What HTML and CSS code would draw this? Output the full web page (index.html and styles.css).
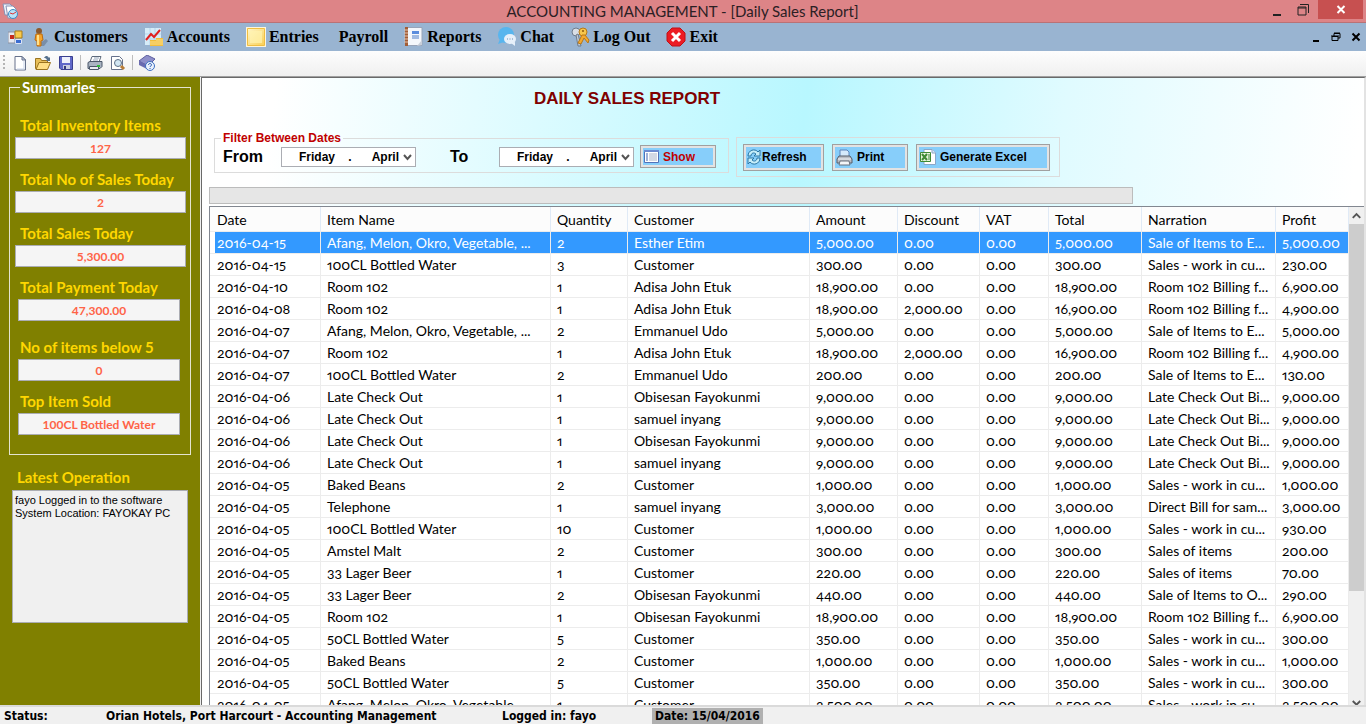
FILE: index.html
```
<!DOCTYPE html>
<html lang="en">
<head>
  <meta charset="UTF-8">
  <meta name="viewport" content="width=device-width, initial-scale=1.0">
  <title>ACCOUNTING MANAGEMENT - [Daily Sales Report]</title>
  <link rel="stylesheet" href="styles.css">
</head>
<body>

<header class="titlebar">
  <svg class="app-icon" width="18" height="18" viewBox="0 0 18 18">
    <path d="M2 2h7l2 2v9H4z" fill="#eef3fb" stroke="#8792b5"/>
    <path d="M5 4h7l3 3v9H7z" fill="#fff" stroke="#8792b5"/>
    <circle cx="12" cy="12" r="4.500" fill="#b9e3f7" stroke="#3d8cc4"/>
    <path d="M12 12l3-2M12 12l-3-1" stroke="#d33" fill="none"/>
  </svg>
  <h1 class="title">ACCOUNTING MANAGEMENT - [Daily Sales Report]</h1>
  <div class="window-buttons">
    <button class="win-btn" aria-label="Minimize"><svg width="12" height="14" viewBox="0 0 12 14"><path d="M2 11h8v2H2z" fill="#222"/></svg></button>
    <button class="win-btn" aria-label="Restore"><svg width="12" height="14" viewBox="0 0 12 14"><path d="M1 4h8v8H1zM1 5h8M3 1.500h8.500V10" fill="none" stroke="#222"/></svg></button>
    <button class="win-btn close" aria-label="Close"><svg width="10" height="9" viewBox="0 0 10 9"><path d="M1.500 1l7 7M8.500 1l-7 7" stroke="#fff" stroke-width="2"/></svg></button>
  </div>
</header>

<nav class="menubar">
  <a href="#" class="form-icon" aria-label="System menu">
    <svg width="15" height="15" viewBox="0 0 15 15">
      <path d="M0 2h7v11H0z" fill="#e6e9f0" stroke="#8a93a5"/>
      <path d="M2 5h4v4H2z" fill="#c62a1c"/>
      <path d="M7 1h7v7H7z" fill="#f8ca4c" stroke="#a87b18"/>
      <path d="M7.500 9.500h6v4h-6z" fill="#3a6cd0" stroke="#dbe3f5"/>
    </svg>
  </a>
  <a href="#" class="menu-item">
    <svg width="20" height="20" viewBox="0 0 20 20">
      <path d="M9 16l6-4 2 2-4 5H9z" fill="#65758a" opacity=".6"/>
      <circle cx="8" cy="4" r="3" fill="#8b5a2e"/>
      <path d="M5 7h6l1 6-2 1v5H6v-5l-2-1z" fill="#f5a32a" stroke="#bb6a0c"/>
      <path d="M6 8h2v10H6z" fill="#ffe08a"/>
    </svg>
    Customers
  </a>
  <a href="#" class="menu-item">
    <svg width="20" height="20" viewBox="0 0 20 20">
      <path d="M1 1h16v17H1z" fill="#d6ecf8"/>
      <path d="M1 7h16M1 12h16M6 1v17M11 1v17" stroke="#b4d7ec"/>
      <path d="M2 13l5-6 3 3 6-7" fill="none" stroke="#e02020" stroke-width="2"/>
      <path d="M6 13h6v6H6zM12 11h7v8h-7z" fill="#f2bd3b"/>
      <path d="M6 15h6M6 17h6M12 13h7M12 15h7M12 17h7" stroke="#fbe08d"/>
    </svg>
    Accounts
  </a>
  <a href="#" class="menu-item">
    <svg width="20" height="20" viewBox="0 0 20 20">
      <defs>
        <linearGradient id="note" x1="0" y1="0" x2="1" y2="1"><stop offset="0" stop-color="#fff6c8"/><stop offset="1" stop-color="#f9cf55"/></linearGradient>
      </defs>
      <path d="M0 0h20v20H0z" fill="#fdf5dc"/>
      <path d="M1.500 1.500h17v17h-17z" fill="url(#note)" stroke="#f0be42"/>
      <path d="M4 4h12v12H4z" fill="#fff3b0" opacity=".7"/>
    </svg>
    Entries
  </a>
  <a href="#" class="menu-item text-only">Payroll</a>
  <a href="#" class="menu-item">
    <svg width="20" height="20" viewBox="0 0 20 20">
      <path d="M3 .5h15v18H3z" fill="#f4f7fb" stroke="#98a4b8"/>
      <path d="M1 0h3v19H1z" fill="#a35d35"/>
      <path d="M0 3h4M0 6h4M0 9h4M0 12h4M0 15h4" stroke="#e4c6b2"/>
      <path d="M8 4h7v3H8z" fill="#5b8ddd"/>
      <path d="M8 9h7M8 11h7" stroke="#4f7fc8"/>
      <path d="M18 13l-5 6 5-1z" fill="#c8cfda"/>
    </svg>
    Reports
  </a>
  <a href="#" class="menu-item">
    <svg width="20" height="20" viewBox="0 0 20 20">
      <circle cx="9" cy="8" r="8" fill="#58b5ee"/>
      <path d="M3 12l-2 5 6-2z" fill="#58b5ee"/>
      <ellipse cx="13" cy="12" rx="6" ry="5" fill="#e7f0fa"/>
      <path d="M14 16l4 3v-4z" fill="#e7f0fa"/>
      <path d="M10 12h1M12.500 12h1M15 12h1" stroke="#6d8fb5" stroke-width="1"/>
    </svg>
    Chat
  </a>
  <a href="#" class="menu-item">
    <svg width="20" height="20" viewBox="0 0 20 20">
      <circle cx="6" cy="5" r="4" fill="#d9dee5" stroke="#6f7c8c"/>
      <path d="M6 8l2 11h3L8 7z" fill="#c3cad3" stroke="#6f7c8c"/>
      <circle cx="13" cy="5" r="4" fill="#f7c64b" stroke="#b87818"/>
      <circle cx="13" cy="4" r="1" fill="#8f5a0b"/>
      <path d="M12 8l-4 8 3 1 3-6 4 5 1-3-4-5z" fill="#f4a92e" stroke="#b87818"/>
    </svg>
    Log Out
  </a>
  <a href="#" class="menu-item">
    <svg width="20" height="20" viewBox="0 0 20 20">
      <path d="M6 1h8l5 5v8l-5 5H6l-5-5V6z" fill="#ec1c24" stroke="#c01016"/>
      <path d="M6 6l8 8M14 6l-8 8" stroke="#fff" stroke-width="3"/>
    </svg>
    Exit
  </a>
  <div class="child-buttons">
    <button class="mdi-btn" aria-label="Minimize report"><svg width="10" height="10" viewBox="0 0 10 10"><path d="M2 8h6v2H2z"/></svg></button>
    <button class="mdi-btn" aria-label="Restore report"><svg width="10" height="10" viewBox="0 0 10 10"><path d="M1 4.500h6v4H1zM3 4V1.500h6V6H7M0 4h8M3 1h6" fill="none" stroke="#000"/></svg></button>
    <button class="mdi-btn" aria-label="Close report"><svg width="10" height="10" viewBox="0 0 10 10"><path d="M1.500 1.500l7 7M8.500 1.500l-7 7" stroke="#000" stroke-width="2"/></svg></button>
  </div>
</nav>

<div class="toolbar">
  <span class="grip"></span>
  <button class="tool" aria-label="New">
    <svg width="16" height="16" viewBox="0 0 16 16"><path d="M3 1.500h7L13.500 5v10H3z" fill="#fff" stroke="#66718b"/><path d="M10 1.500V5h3.500z" fill="#c5d0e6" stroke="#66718b"/><path d="M12 6v8H5" fill="none" stroke="#c9d5ea"/></svg>
  </button>
  <button class="tool" aria-label="Open">
    <svg width="16" height="16" viewBox="0 0 16 16"><path d="M.5 3.500h5l1 2h6v8H.5z" fill="#e8bf5a" stroke="#9a7420"/><path d="M4 7.500h11.500l-3 7H1z" fill="#ffdf85" stroke="#9a7420"/><path d="M9 3c2-3 4-2 5 0l1-1v4h-4l1-1c-1-2-2-2-3-2z" fill="#55708e"/></svg>
  </button>
  <button class="tool" aria-label="Save">
    <svg width="16" height="16" viewBox="0 0 16 16"><path d="M1.500 1.500h13v13H3l-1.500-1.500z" fill="#6068c8" stroke="#3a3f8f"/><path d="M4 2h8v6H4z" fill="#eef0fb"/><path d="M5 10h7v4H5z" fill="#c9cde0"/><path d="M6 11h2v3H6z" fill="#343a7a"/></svg>
  </button>
  <span class="divider"></span>
  <button class="tool" aria-label="Print">
    <svg width="16" height="16" viewBox="0 0 16 16"><path d="M5 1.500h9L12 7H3z" fill="#fff" stroke="#5e6b7d"/><path d="M7 3h5M6 5h5" stroke="#95a4b8"/><path d="M1 7.500l2-1h12v5l-2 2H1z" fill="#aab4c2" stroke="#4b5768"/><path d="M2.500 11.500h9v3h-9z" fill="#e9edf2" stroke="#4b5768"/><path d="M10 10h3v2h-3z" fill="#2fbb3a"/></svg>
  </button>
  <button class="tool" aria-label="Print preview">
    <svg width="16" height="16" viewBox="0 0 16 16"><path d="M1.500 1.500h8l3 3v10h-11z" fill="#fff" stroke="#66718b"/><circle cx="8" cy="8" r="3.500" fill="#d2e6f3" stroke="#5c6f85"/><path d="M11 11l3 3" stroke="#b77b35" stroke-width="3"/></svg>
  </button>
  <span class="divider"></span>
  <button class="tool" aria-label="Help">
    <svg width="16" height="16" viewBox="0 0 16 16"><path d="M0 6l8-6 8 4-7 7z" fill="#8e8fca" stroke="#5d5e9e"/><path d="M0 6v4l8 4V10z" fill="#6a6bb0"/><circle cx="11" cy="11" r="4.500" fill="#e9f1fc" stroke="#3c6fc0"/><path d="M9.500 10c0-2 3-2 3 0 0 1-1.500 1-1.500 2M11 13v1" fill="none" stroke="#2456b0" stroke-width="1"/></svg>
  </button>
</div>

<div class="workspace">
  <aside class="sidebar">
    <fieldset class="summaries">
      <legend>Summaries</legend>
      <div class="stat">
        <label for="inventory">Total Inventory Items</label>
        <input id="inventory" type="text" value="127" readonly>
      </div>
      <div class="stat">
        <label for="salesCount">Total No of Sales Today</label>
        <input id="salesCount" type="text" value="2" readonly>
      </div>
      <div class="stat">
        <label for="salesTotal">Total Sales Today</label>
        <input id="salesTotal" type="text" value="5,300.00" readonly>
      </div>
      <div class="stat narrow">
        <label for="payments">Total Payment Today</label>
        <input id="payments" type="text" value="47,300.00" readonly>
      </div>
      <div class="stat narrow apart">
        <label for="lowStock">No of items below 5</label>
        <input id="lowStock" type="text" value="0" readonly>
      </div>
      <div class="stat narrow">
        <label for="topItem">Top Item Sold</label>
        <input id="topItem" type="text" value="100CL Bottled Water" readonly>
      </div>
    </fieldset>
    <div class="latest">
      <label for="operations">Latest Operation</label>
      <textarea id="operations" readonly>fayo Logged in to the software
System Location: FAYOKAY PC</textarea>
    </div>
  </aside>

  <main class="report">
    <h2>DAILY SALES REPORT</h2>

    <div class="filters">
      <fieldset class="dates">
        <legend>Filter Between Dates</legend>
        <label for="fromDate">From</label>
        <span class="picker">
          <select id="fromDate"><option>Friday &nbsp; &nbsp;. &nbsp; &nbsp; &nbsp;April</option></select>
          <svg width="9" height="7" viewBox="0 0 9 7"><path d="M1 1l3.500 4L8 1" fill="none" stroke="#555" stroke-width="2"/></svg>
        </span>
        <label for="toDate" class="to">To</label>
        <span class="picker">
          <select id="toDate"><option>Friday &nbsp; &nbsp;. &nbsp; &nbsp; &nbsp;April</option></select>
          <svg width="9" height="7" viewBox="0 0 9 7"><path d="M1 1l3.500 4L8 1" fill="none" stroke="#555" stroke-width="2"/></svg>
        </span>
        <button class="action show">
          <svg width="15" height="13" viewBox="0 0 15 13"><path d="M.5 .5h14v12H.5z" fill="#fff" stroke="#5272b8"/><path d="M0 0h15v2H0z" fill="#6c8bd0"/><path d="M2 4h2M2 6h2M2 8h2M2 10h2" stroke="#3f62b0"/><path d="M5 4h8M5 6h8M5 8h8M5 10h8" stroke="#a9b4c9"/></svg>
          Show
        </button>
      </fieldset>

      <div class="actions">
        <button class="action refresh">
          <svg width="14" height="16" viewBox="0 0 14 16"><path d="M1 7c0-6 7-8 10-4l2-2v6H7l2-2C7 3 4 4 4 7zM13 9c0 6-7 8-10 4l-2 2V9h6l-2 2c2 2 5 1 5-2z" fill="#c6eefa" stroke="#2a76a4"/></svg>
          Refresh
        </button>
        <button class="action print">
          <svg width="17" height="17" viewBox="0 0 17 17"><path d="M4 1h7l2 2v6H4z" fill="#d5e9fb" stroke="#5c84bb"/><path d="M3 7h11l2 3v4H1v-4z" fill="#b8bcc4" stroke="#565c68"/><path d="M2 10h13" stroke="#f5f5f7"/><path d="M4 12h9l1 4H3z" fill="#f4f6f9" stroke="#6a707c"/></svg>
          Print
        </button>
        <button class="action excel">
          <svg width="16" height="16" viewBox="0 0 16 16"><path d="M4 .5h8l3.500 3.500v11.500H4z" fill="#fff" stroke="#8ba6c8"/><path d="M12 .5V4h3.500" fill="#dce7f5" stroke="#8ba6c8"/><path d="M.5 3.500h10v9H.5z" fill="#e6f3dd" stroke="#3f8a35"/><path d="M2 5l5 6M7 5l-5 6" stroke="#3f8a35" stroke-width="2"/><path d="M8 6h2M8 8h2M8 10h2" stroke="#3f8a35"/></svg>
          Generate Excel
        </button>
      </div>
    </div>

    <progress value="0" max="100" aria-label="Report progress"></progress>

    <div class="grid">
      <div class="grid-rows">
        <table>
          <colgroup>
            <col class="c-date"><col class="c-item"><col class="c-qty"><col class="c-customer"><col class="c-amount">
            <col class="c-discount"><col class="c-vat"><col class="c-total"><col class="c-narration"><col class="c-profit">
          </colgroup>
          <thead>
            <tr><th>Date</th><th>Item Name</th><th>Quantity</th><th>Customer</th><th>Amount</th><th>Discount</th><th>VAT</th><th>Total</th><th>Narration</th><th>Profit</th></tr>
          </thead>
          <tbody>
            <tr class="selected"><td>2016-04-15</td><td>Afang, Melon, Okro, Vegetable, ...</td><td>2</td><td>Esther Etim</td><td>5,000.00</td><td>0.00</td><td>0.00</td><td>5,000.00</td><td>Sale of Items to E...</td><td>5,000.00</td></tr>
            <tr><td>2016-04-15</td><td>100CL Bottled Water</td><td>3</td><td>Customer</td><td>300.00</td><td>0.00</td><td>0.00</td><td>300.00</td><td>Sales - work in cu...</td><td>230.00</td></tr>
            <tr><td>2016-04-10</td><td>Room 102</td><td>1</td><td>Adisa John Etuk</td><td>18,900.00</td><td>0.00</td><td>0.00</td><td>18,900.00</td><td>Room 102 Billing f...</td><td>6,900.00</td></tr>
            <tr><td>2016-04-08</td><td>Room 102</td><td>1</td><td>Adisa John Etuk</td><td>18,900.00</td><td>2,000.00</td><td>0.00</td><td>16,900.00</td><td>Room 102 Billing f...</td><td>4,900.00</td></tr>
            <tr><td>2016-04-07</td><td>Afang, Melon, Okro, Vegetable, ...</td><td>2</td><td>Emmanuel Udo</td><td>5,000.00</td><td>0.00</td><td>0.00</td><td>5,000.00</td><td>Sale of Items to E...</td><td>5,000.00</td></tr>
            <tr><td>2016-04-07</td><td>Room 102</td><td>1</td><td>Adisa John Etuk</td><td>18,900.00</td><td>2,000.00</td><td>0.00</td><td>16,900.00</td><td>Room 102 Billing f...</td><td>4,900.00</td></tr>
            <tr><td>2016-04-07</td><td>100CL Bottled Water</td><td>2</td><td>Emmanuel Udo</td><td>200.00</td><td>0.00</td><td>0.00</td><td>200.00</td><td>Sale of Items to E...</td><td>130.00</td></tr>
            <tr><td>2016-04-06</td><td>Late Check Out</td><td>1</td><td>Obisesan Fayokunmi</td><td>9,000.00</td><td>0.00</td><td>0.00</td><td>9,000.00</td><td>Late Check Out Bi...</td><td>9,000.00</td></tr>
            <tr><td>2016-04-06</td><td>Late Check Out</td><td>1</td><td>samuel inyang</td><td>9,000.00</td><td>0.00</td><td>0.00</td><td>9,000.00</td><td>Late Check Out Bi...</td><td>9,000.00</td></tr>
            <tr><td>2016-04-06</td><td>Late Check Out</td><td>1</td><td>Obisesan Fayokunmi</td><td>9,000.00</td><td>0.00</td><td>0.00</td><td>9,000.00</td><td>Late Check Out Bi...</td><td>9,000.00</td></tr>
            <tr><td>2016-04-06</td><td>Late Check Out</td><td>1</td><td>samuel inyang</td><td>9,000.00</td><td>0.00</td><td>0.00</td><td>9,000.00</td><td>Late Check Out Bi...</td><td>9,000.00</td></tr>
            <tr><td>2016-04-05</td><td>Baked Beans</td><td>2</td><td>Customer</td><td>1,000.00</td><td>0.00</td><td>0.00</td><td>1,000.00</td><td>Sales - work in cu...</td><td>1,000.00</td></tr>
            <tr><td>2016-04-05</td><td>Telephone</td><td>1</td><td>samuel inyang</td><td>3,000.00</td><td>0.00</td><td>0.00</td><td>3,000.00</td><td>Direct Bill for sam...</td><td>3,000.00</td></tr>
            <tr><td>2016-04-05</td><td>100CL Bottled Water</td><td>10</td><td>Customer</td><td>1,000.00</td><td>0.00</td><td>0.00</td><td>1,000.00</td><td>Sales - work in cu...</td><td>930.00</td></tr>
            <tr><td>2016-04-05</td><td>Amstel Malt</td><td>2</td><td>Customer</td><td>300.00</td><td>0.00</td><td>0.00</td><td>300.00</td><td>Sales of items</td><td>200.00</td></tr>
            <tr><td>2016-04-05</td><td>33 Lager Beer</td><td>1</td><td>Customer</td><td>220.00</td><td>0.00</td><td>0.00</td><td>220.00</td><td>Sales of items</td><td>70.00</td></tr>
            <tr><td>2016-04-05</td><td>33 Lager Beer</td><td>2</td><td>Obisesan Fayokunmi</td><td>440.00</td><td>0.00</td><td>0.00</td><td>440.00</td><td>Sale of Items to O...</td><td>290.00</td></tr>
            <tr><td>2016-04-05</td><td>Room 102</td><td>1</td><td>Obisesan Fayokunmi</td><td>18,900.00</td><td>0.00</td><td>0.00</td><td>18,900.00</td><td>Room 102 Billing f...</td><td>6,900.00</td></tr>
            <tr><td>2016-04-05</td><td>50CL Bottled Water</td><td>5</td><td>Customer</td><td>350.00</td><td>0.00</td><td>0.00</td><td>350.00</td><td>Sales - work in cu...</td><td>300.00</td></tr>
            <tr><td>2016-04-05</td><td>Baked Beans</td><td>2</td><td>Customer</td><td>1,000.00</td><td>0.00</td><td>0.00</td><td>1,000.00</td><td>Sales - work in cu...</td><td>1,000.00</td></tr>
            <tr><td>2016-04-05</td><td>50CL Bottled Water</td><td>5</td><td>Customer</td><td>350.00</td><td>0.00</td><td>0.00</td><td>350.00</td><td>Sales - work in cu...</td><td>300.00</td></tr>
            <tr><td>2016-04-05</td><td>Afang, Melon, Okro, Vegetable, ...</td><td>1</td><td>Customer</td><td>2,500.00</td><td>0.00</td><td>0.00</td><td>2,500.00</td><td>Sales - work in cu...</td><td>2,500.00</td></tr>
          </tbody>
        </table>
      </div>
      <div class="scrollbar">
        <svg width="15" height="17" viewBox="0 0 16 17"><path d="M4 11l4-4 4 4" fill="none" stroke="#555" stroke-width="2"/></svg>
        <div class="thumb"></div>
        <svg width="15" height="8" viewBox="0 0 16 8"><path d="M4 4l4 4 4-4" fill="none" stroke="#555" stroke-width="2"/></svg>
      </div>
    </div>
  </main>
</div>

<footer class="statusbar">
  <span class="status">Status:</span>
  <span class="company">Orian Hotels, Port Harcourt - Accounting Management</span>
  <span class="user">Logged in: fayo</span>
  <span class="date">Date: 15/04/2016</span>
</footer>

</body>
</html>
```
FILE: styles.css
```
* {
  box-sizing: border-box;
}

body {
  margin: 0;
  height: 100vh;
  display: flex;
  flex-direction: column;
  overflow: hidden;
  font-family: "Open Sans", sans-serif;
  font-size: 13px;
  color: #000;
  background-color: #f0f0f0;
}

button {
  border: none;
  background: none;
  padding: 0;
  font-family: inherit;
}

svg {
  display: block;
  flex: none;
}

fieldset {
  margin: 0;
  padding: 0;
  min-width: 0;
}

/* Window title */
.titlebar {
  display: flex;
  align-items: center;
  height: 23px;
  flex: none;
  background-color: #dd8487;
  border-bottom: 1px solid #b97276;
}

.app-icon {
  margin-left: 1px;
}

.title {
  flex: 1;
  margin: 0;
  padding-left: 82px;
  text-align: center;
  font-family: Lato, sans-serif;
  font-size: 15px;
  font-weight: normal;
  line-height: 22px;
  color: #2b2024;
}

.window-buttons {
  display: flex;
  align-self: flex-start;
  padding-right: 3px;
}

.win-btn {
  width: 26px;
  height: 19px;
  display: flex;
  align-items: center;
  justify-content: center;
}

.win-btn.close {
  width: 45px;
  margin-left: 2px;
  background-color: #c75050;
}

/* Menu */
.menubar {
  display: flex;
  align-items: center;
  height: 28px;
  flex: none;
  padding-left: 8px;
  gap: 16px;
  background-color: #99b4d1;
  font-family: "Liberation Serif", serif;
  font-size: 16px;
  font-weight: bold;
}

.menu-item {
  display: flex;
  align-items: center;
  gap: 3px;
  color: #000;
  text-decoration: none;
}

.text-only {
  padding-left: 4px;
}

.form-icon {
  margin-right: -8px;
}

.child-buttons {
  display: flex;
  gap: 10px;
  margin-left: auto;
  padding-right: 5px;
}

.mdi-btn {
  width: 10px;
  height: 10px;
}

/* Toolbar */
.toolbar {
  display: flex;
  align-items: center;
  height: 26px;
  flex: none;
  gap: 7px;
  padding: 0 0 2px 3px;
  background: linear-gradient(#fdfdfd, #f0f0f0);
  border-bottom: 1px solid #a0a0a0;
}

.grip {
  width: 2px;
  height: 15px;
  background: repeating-linear-gradient(#b5b5b5 0 2px, transparent 2px 4px);
}

.tool {
  width: 16px;
  height: 16px;
}

.divider {
  width: 1px;
  height: 15px;
  margin: 0 -1px;
  background-color: #bdbdbd;
}

.workspace {
  display: flex;
  flex: 1;
  min-height: 0;
}

/* Left panel */
.sidebar {
  width: 200px;
  flex: none;
  padding: 1px 9px 0;
  background-color: #808000;
  font-family: Lato, sans-serif;
  font-size: 12px;
  font-weight: bold;
}

.summaries {
  height: 377px;
  padding: 21px 4px 0 5px;
  border: 1px solid #e4e4d0;
}

.summaries legend {
  margin-left: 5px;
  padding: 0 2px;
  font-size: 15px;
  line-height: 18px;
  color: #fff;
}

.stat {
  margin-bottom: 12px;
}

.stat label,
.latest label {
  display: block;
  padding: 0 0 4px 5px;
  line-height: 16px;
  font-size: 15px;
  white-space: nowrap;
  color: #ffd700;
}

.stat input {
  display: block;
  width: 100%;
  height: 22px;
  padding: 0;
  text-align: center;
  font: inherit;
  color: #ff6347;
  background-color: #f5f5f5;
  border: 1px solid #abadb3;
}

.narrow {
  padding: 0 6px 0 3px;
}

.narrow label {
  padding-left: 2px;
}

.apart {
  margin-top: 18px;
}

.latest {
  padding: 14px 0 0 3px;
}

.latest textarea {
  display: block;
  width: 176px;
  height: 133px;
  margin-top: 1px;
  padding: 3px 2px;
  resize: none;
  font-family: "Liberation Sans", sans-serif;
  font-size: 11px;
  line-height: 13px;
  background-color: #f0f0f0;
  border: 1px solid #abadb3;
}

/* Report */
.report {
  display: flex;
  flex-direction: column;
  flex: 1;
  min-width: 0;
  padding-left: 7px;
  margin-left: 1px;
  border-left: 1px solid #696969;
  border-top: 1px solid #696969;
  border-right: 2px solid #e3e3e3;
  background: linear-gradient(97deg, #fff 6%, #b8f7ff 49%, #e0fbff 70%, #fff 94%);
}

.report h2 {
  margin: 0;
  padding: 9px 0 0 325px;
  font-family: "Liberation Sans", sans-serif;
  font-size: 17px;
  line-height: 24px;
  color: #800000;
}

.filters {
  display: flex;
  align-items: flex-start;
  gap: 7px;
  padding: 20px 0 0 5px;
  font-family: "Liberation Sans", sans-serif;
  font-weight: bold;
}

.dates {
  display: flex;
  align-items: center;
  width: 515px;
  height: 42px;
  padding: 0 12px 4px 8px;
  border: 1px solid #dcdcdc;
}

.dates legend {
  padding: 0 2px;
  margin-left: -2px;
  font-size: 12px;
  line-height: 14px;
  color: #c00000;
}

.dates label {
  width: 58px;
  font-size: 16px;
  line-height: 20px;
  font-weight: bold;
}

.dates .to {
  width: 83px;
  padding-left: 34px;
}

.picker {
  position: relative;
  width: 135px;
}

.picker select {
  display: block;
  width: 100%;
  height: 20px;
  padding: 0 0 0 17px;
  appearance: none;
  font-family: "Liberation Sans", sans-serif;
  font-size: 12px;
  font-weight: bold;
  color: #000;
  background-color: #fff;
  border: 1px solid #abadb3;
  border-radius: 0;
}

.picker svg {
  position: absolute;
  right: 4px;
  top: 7px;
  pointer-events: none;
}

.action {
  display: flex;
  align-items: center;
  height: 27px;
  gap: 4px;
  font-size: 12px;
  font-weight: bold;
  color: #000;
  background-color: #87cefa;
  border: 1px solid #a0a0a0;
  box-shadow: inset 0 0 0 2px #e3e3e3;
  padding-left: 3px;
}

.show {
  width: 76px;
  height: 23px;
  margin-left: auto;
  color: #c00000;
}

.actions {
  display: flex;
  align-items: center;
  gap: 8px;
  height: 40px;
  margin-top: 6px;
  padding: 0 9px 0 6px;
  border: 1px solid #dcdcdc;
}

.refresh {
  width: 81px;
  gap: 1px;
}

.print {
  width: 76px;
}

.excel {
  width: 134px;
}

progress {
  appearance: none;
  display: block;
  width: 80%;
  height: 17px;
  margin: 10px 0 2px;
  border: 1px solid #bcbcbc;
  background-color: #e6e6e6;
}

progress::-webkit-progress-bar {
  background-color: #e6e6e6;
}

/* Sales grid */
.grid {
  display: flex;
  flex: 1;
  min-height: 0;
  background-color: #fff;
  border-top: 1px solid #828790;
  border-left: 1px solid #828790;
}

.grid-rows {
  flex: 1;
  min-width: 0;
  overflow: hidden;
}

table {
  width: 100%;
  table-layout: fixed;
  border-collapse: separate;
  border-spacing: 0;
  font-family: Lato, sans-serif;
  font-size: 14px;
  font-variant-numeric: oldstyle-nums proportional-nums;
}

.c-date { width: 111px; }
.c-item { width: 230px; }
.c-qty { width: 77px; }
.c-amount { width: 88px; }
.c-discount { width: 82px; }
.c-vat { width: 69px; }
.c-total { width: 93px; }
.c-narration { width: 134px; }
.c-profit { width: 73px; }

th,
td {
  padding: 0 0 0 6px;
  overflow: hidden;
  white-space: nowrap;
  text-align: left;
  font-weight: normal;
  border-right: 1px solid #ececec;
  border-bottom: 1px solid #ececec;
}

th:first-child,
td:first-child {
  padding-left: 7px;
}

th {
  height: 25px;
  background-color: #fcfcfc;
  border-right-color: #e0eaf6;
}

td {
  height: 22px;
  line-height: 21px;
}

.selected td {
  color: #fff;
  background-color: #3399ff;
}

.selected td:first-child {
  background: linear-gradient(90deg, #fff 5px, #3399ff 5px);
}

.scrollbar {
  display: flex;
  flex-direction: column;
  width: 15px;
  flex: none;
  background-color: #f0f0f0;
}

.thumb {
  height: 367px;
  margin-bottom: auto;
  background-color: #cdcdcd;
}

/* Status line */
.statusbar {
  display: flex;
  height: 19px;
  flex: none;
  padding: 1px 0 0 4px;
  font-family: "DejaVu Sans Condensed", "Open Sans", sans-serif;
  font-size: 12px;
  font-weight: bold;
  line-height: 17px;
  border-top: 2px solid #dadada;
  background-color: #f0f0f0;
}

.status {
  width: 102px;
}

.company {
  width: 396px;
}

.user {
  width: 150px;
}

.date {
  padding: 0 3px;
  background-color: #b0b0b0;
}
```
